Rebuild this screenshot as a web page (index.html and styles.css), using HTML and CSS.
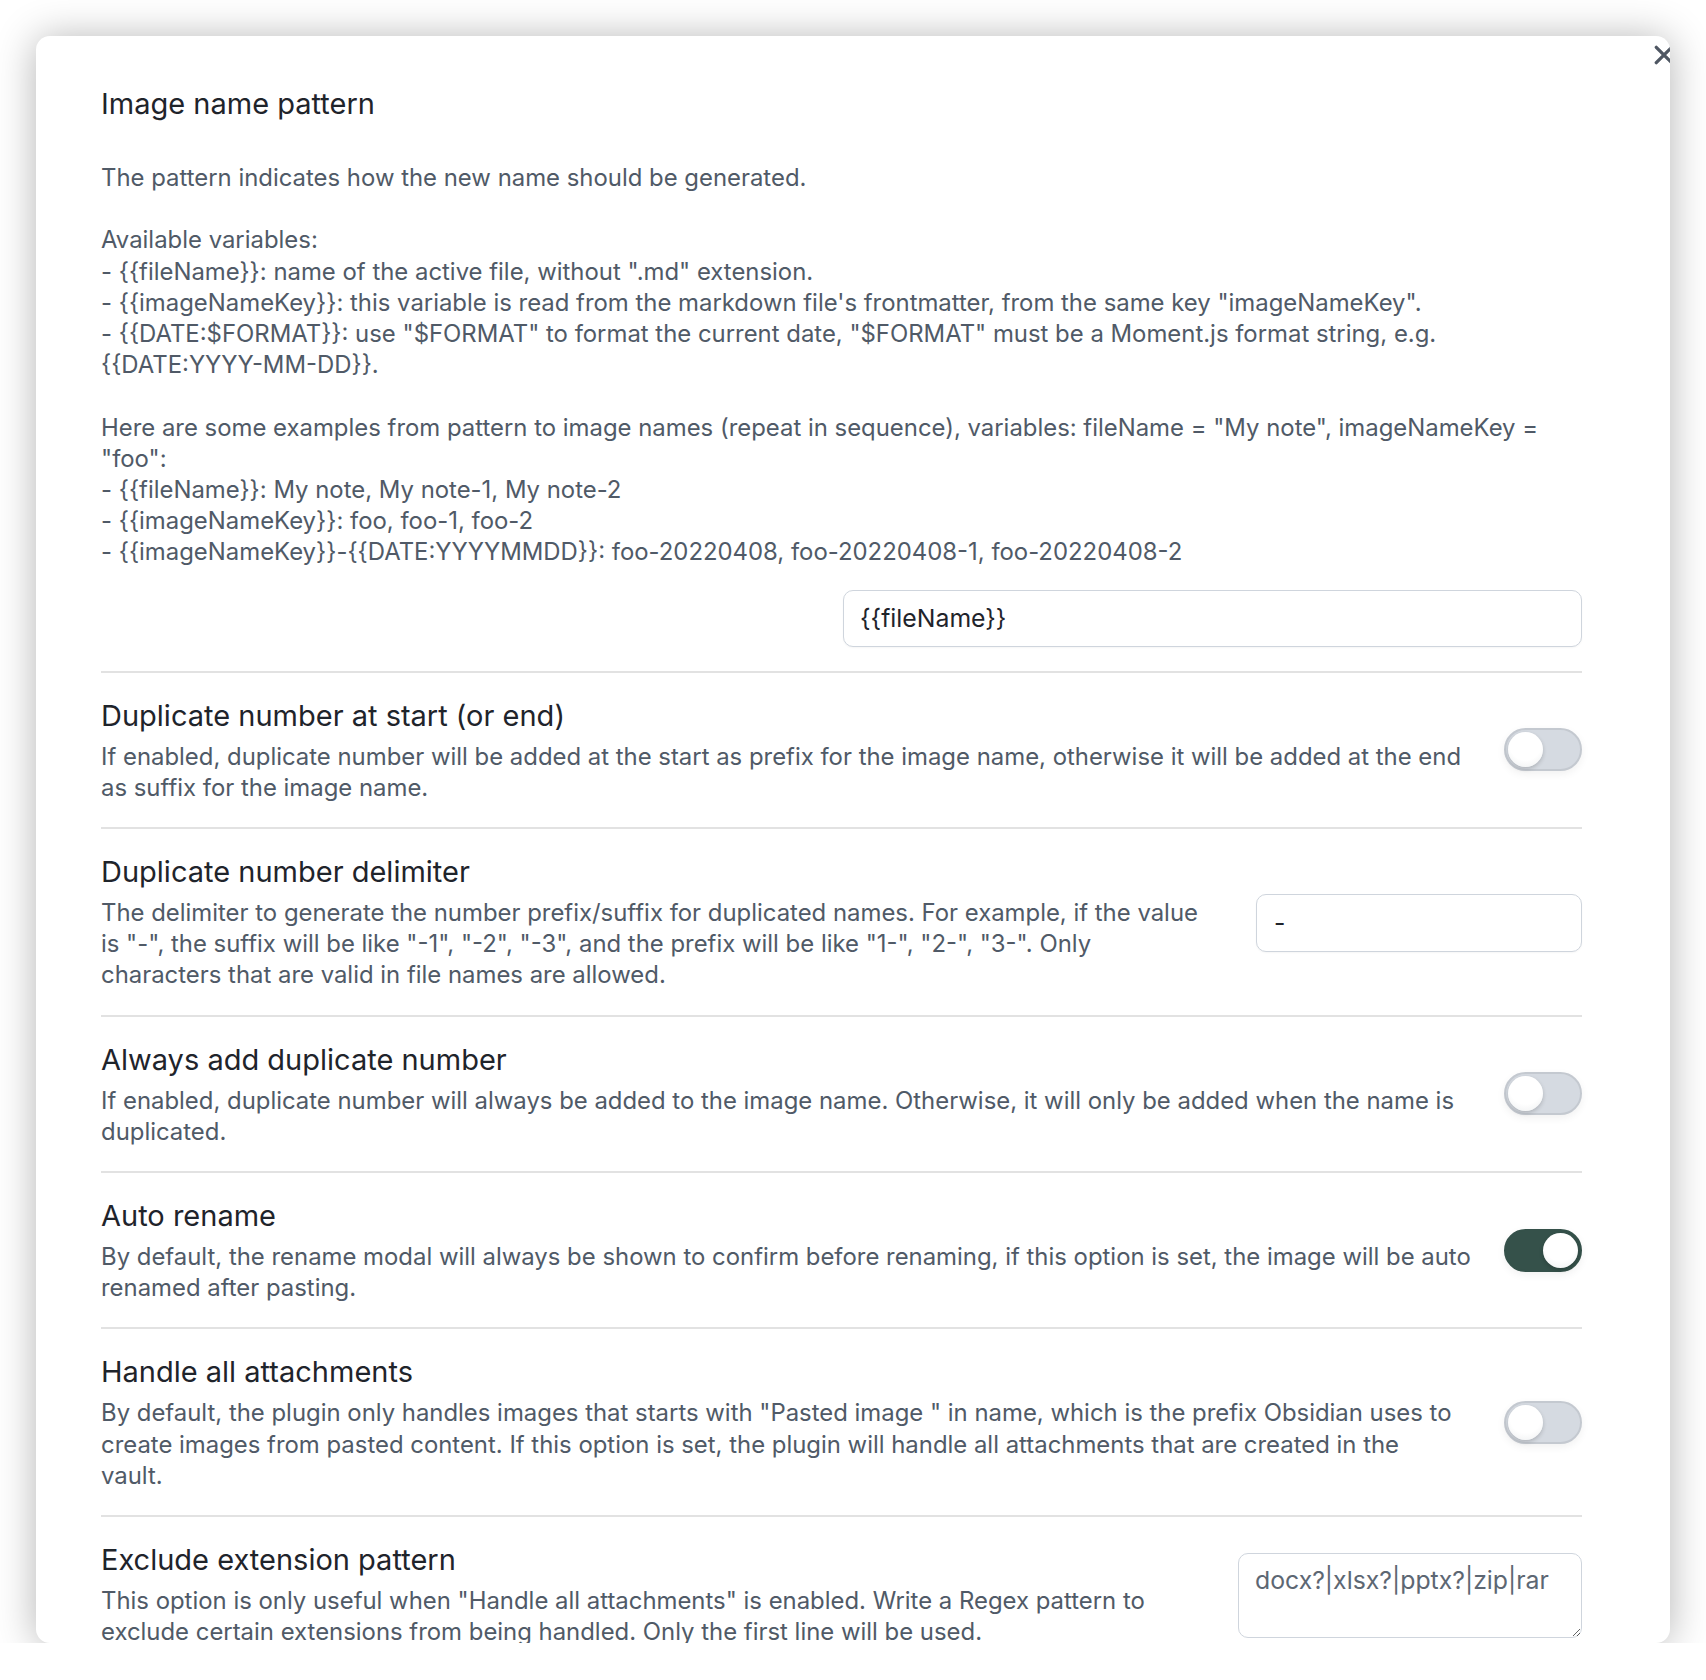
FILE: index.html
```html
<!DOCTYPE html>
<html lang="en">
<head>
<meta charset="utf-8">
<title>Image name pattern settings</title>
<link rel="stylesheet" href="styles.css">
</head>
<body>
<div class="modal">
  <button class="close" aria-label="Close">
    <svg width="20" height="20" viewBox="0 0 20 20"><path d="M3 3 L17 17 M17 3 L3 17" stroke="#4f5763" stroke-width="3" stroke-linecap="round" fill="none"/></svg>
  </button>
  <div class="content">
    <div class="item item-first">
      <div class="name">Image name pattern</div>
      <div class="desc desc-first">
        <p>The pattern indicates how the new name should be generated.</p>
        <p>Available variables:<br>- {{fileName}}: name of the active file, without ".md" extension.<br>- {{imageNameKey}}: this variable is read from the markdown file's frontmatter, from the same key "imageNameKey".<br>- {{DATE:$FORMAT}}: use "$FORMAT" to format the current date, "$FORMAT" must be a Moment.js format string, e.g.<br>{{DATE:YYYY-MM-DD}}.</p>
        <p>Here are some examples from pattern to image names (repeat in sequence), variables: fileName = "My note", imageNameKey =<br>"foo":<br>- {{fileName}}: My note, My note-1, My note-2<br>- {{imageNameKey}}: foo, foo-1, foo-2<br>- {{imageNameKey}}-{{DATE:YYYYMMDD}}: foo-20220408, foo-20220408-1, foo-20220408-2</p>
      </div>
      <div class="control-wide"><input class="text-input input-wide" type="text" value="{{fileName}}"></div>
    </div>

    <div class="item">
      <div class="info">
        <div class="name">Duplicate number at start (or end)</div>
        <div class="desc">If enabled, duplicate number will be added at the start as prefix for the image name, otherwise it will be added at the end<br>as suffix for the image name.</div>
      </div>
      <div class="control"><div class="toggle"><div class="knob"></div></div></div>
    </div>

    <div class="item">
      <div class="info">
        <div class="name">Duplicate number delimiter</div>
        <div class="desc">The delimiter to generate the number prefix/suffix for duplicated names. For example, if the value<br>is "-", the suffix will be like "-1", "-2", "-3", and the prefix will be like "1-", "2-", "3-". Only<br>characters that are valid in file names are allowed.</div>
      </div>
      <div class="control"><input class="text-input input-small" type="text" value="-"></div>
    </div>

    <div class="item">
      <div class="info">
        <div class="name">Always add duplicate number</div>
        <div class="desc">If enabled, duplicate number will always be added to the image name. Otherwise, it will only be added when the name is<br>duplicated.</div>
      </div>
      <div class="control"><div class="toggle"><div class="knob"></div></div></div>
    </div>

    <div class="item">
      <div class="info">
        <div class="name">Auto rename</div>
        <div class="desc">By default, the rename modal will always be shown to confirm before renaming, if this option is set, the image will be auto<br>renamed after pasting.</div>
      </div>
      <div class="control"><div class="toggle toggle-on"><div class="knob"></div></div></div>
    </div>

    <div class="item">
      <div class="info">
        <div class="name">Handle all attachments</div>
        <div class="desc">By default, the plugin only handles images that starts with "Pasted image " in name, which is the prefix Obsidian uses to<br>create images from pasted content. If this option is set, the plugin will handle all attachments that are created in the<br>vault.</div>
      </div>
      <div class="control"><div class="toggle"><div class="knob"></div></div></div>
    </div>

    <div class="item">
      <div class="info">
        <div class="name">Exclude extension pattern</div>
        <div class="desc">This option is only useful when "Handle all attachments" is enabled. Write a Regex pattern to<br>exclude certain extensions from being handled. Only the first line will be used.</div>
      </div>
      <div class="control"><textarea class="text-area" placeholder="docx?|xlsx?|pptx?|zip|rar"></textarea></div>
    </div>
  </div>
</div>
</body>
</html>
```

FILE: styles.css
```css
html, body {
  margin: 0;
  padding: 0;
  background: #ffffff;
}

body {
  font-family: Inter, "Noto Sans", "Liberation Sans", sans-serif;
  -webkit-font-smoothing: antialiased;
}

.modal {
  position: relative;
  margin: 36px 0 0 36px;
  width: 1634px;
  height: 1607px;
  background: #ffffff;
  border-radius: 14px;
  box-shadow: 0 2px 40px rgba(0, 0, 0, 0.3);
  overflow: hidden;
  box-sizing: border-box;
}

.close {
  position: absolute;
  top: 8px;
  left: 1617px;
  width: 22px;
  height: 22px;
  padding: 0;
  border: none;
  background: transparent;
  display: block;
}

.close svg {
  display: block;
  width: 22px;
  height: 22px;
}

.content {
  padding: 24px 88px 0 65px;
}

.item {
  display: flex;
  align-items: center;
  border-top: 2px solid #e2e2e2;
  padding: 27px 0 24px;
}

.item-first {
  display: block;
  border-top: none;
  padding-top: 28px;
}

.info {
  flex: 1 1 auto;
  min-width: 0;
  margin-right: 16px;
}

.name {
  font-size: 29px;
  line-height: 31px;
  color: #1f242b;
  white-space: nowrap;
}

.desc {
  margin-top: 10px;
  font-size: 23.9px;
  line-height: 31.2px;
  color: #505a67;
  white-space: nowrap;
}

.desc-first {
  margin-top: 43px;
}

.desc p {
  margin: 0 0 31.2px;
}

.desc p:last-child {
  margin-bottom: 0;
}

.control {
  flex: 0 0 auto;
  display: flex;
  justify-content: flex-end;
}

.control-wide {
  display: flex;
  justify-content: flex-end;
  margin-top: 22px;
}

.text-input {
  box-sizing: border-box;
  border: 1.6px solid #cfd5dd;
  border-radius: 10px;
  background: #ffffff;
  font-family: Inter, "Noto Sans", "Liberation Sans", sans-serif;
  font-size: 24.8px;
  color: #1f242b;
  padding: 0 16px;
  outline: none;
  box-shadow: 0 1px 2px rgba(0, 0, 0, 0.04);
}

.input-wide {
  width: 739px;
  height: 57px;
}

.input-small {
  width: 326px;
  height: 58px;
  padding-left: 17px;
}

.text-area {
  box-sizing: border-box;
  width: 344px;
  height: 85px;
  border: 1.6px solid #cfd5dd;
  border-radius: 10px;
  background: #ffffff;
  font-family: Inter, "Noto Sans", "Liberation Sans", sans-serif;
  font-size: 24.8px;
  line-height: 32px;
  padding: 10px 16px;
  outline: none;
  resize: vertical;
  display: block;
}

.text-area::placeholder {
  color: #5d6773;
  opacity: 1;
}

.toggle {
  position: relative;
  box-sizing: border-box;
  width: 78px;
  height: 43px;
  margin-top: -3px;
  border-radius: 22px;
  background: #d5dae1;
  border: 2px solid #c4c9d0;
  box-shadow: 0 3px 8px rgba(0, 0, 0, 0.06);
}

.toggle .knob {
  position: absolute;
  top: 2px;
  left: 2px;
  width: 35px;
  height: 35px;
  border-radius: 50%;
  background: radial-gradient(circle at 50% 35%, #ffffff 55%, #eceeef 100%);
  box-shadow: 0 2px 4px rgba(0, 0, 0, 0.18);
}

.toggle-on {
  background: #35514a;
  border-color: #35514a;
}

.toggle-on .knob {
  left: auto;
  right: 2px;
}
```
